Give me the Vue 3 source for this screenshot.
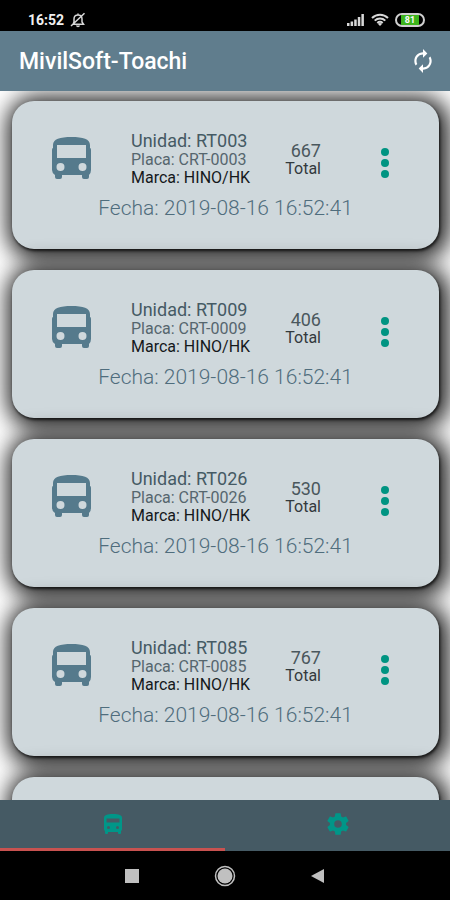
<script setup>
import { ref } from 'vue'

const tab = ref('buses')
const units = [
  { unidad: 'RT003', placa: 'CRT-0003', marca: 'HINO/HK', total: 667, fecha: '2019-08-16 16:52:41' },
  { unidad: 'RT009', placa: 'CRT-0009', marca: 'HINO/HK', total: 406, fecha: '2019-08-16 16:52:41' },
  { unidad: 'RT026', placa: 'CRT-0026', marca: 'HINO/HK', total: 530, fecha: '2019-08-16 16:52:41' },
  { unidad: 'RT085', placa: 'CRT-0085', marca: 'HINO/HK', total: 767, fecha: '2019-08-16 16:52:41' },
]
</script>

<template>
  <div class="app">
    <div class="status">
      <span class="clock">16:52</span>
      <svg class="bell" viewBox="0 0 16 16" aria-hidden="true">
        <path d="M3 12.2h10.5L12 10V7c0-2.300-1.500-4-4-4S4 4.700 4 7v3zM6.500 13.500c.6 1.200 2.400 1.200 3 0M8 1.500V3M1 14 14.500 1.200" fill="none" stroke="currentColor" stroke-width="1.500" />
      </svg>
      <span class="spacer"></span>
      <svg class="signal" viewBox="0 0 18 13" aria-hidden="true">
        <path d="M0 10h2.500v3H0zM3.600 8.500h2.500V13H3.600zM7.200 6.500h2.500V13H7.200zM10.800 4h2.500v9h-2.500zM14.400 1h2.500v12h-2.500z" fill="currentColor" />
      </svg>
      <svg class="wifi" viewBox="0 0 18 13" aria-hidden="true">
        <path d="M1 5C5.500.6 12.500.6 17 5M3.700 7.600c3-2.900 7.600-2.900 10.600 0M6.300 10c1.600-1.400 3.800-1.400 5.400 0" fill="none" stroke="currentColor" stroke-width="2" />
        <path d="M9 13 6.800 10.700c1.200-1.100 3.200-1.100 4.400 0z" fill="currentColor" />
      </svg>
      <span class="battery"><span class="charge">81</span></span>
    </div>

    <header class="bar">
      <h1>MivilSoft-Toachi</h1>
      <button class="refresh" type="button" aria-label="Actualizar">
        <svg viewBox="0 0 24 24" aria-hidden="true">
          <path d="M12 6v3l4-4-4-4v3c-4.420 0-8 3.580-8 8 0 1.570.46 3.030 1.240 4.260L6.700 14.800A5.900 5.900 0 0 1 6 12c0-3.310 2.690-6 6-6zm6.760 1.740L17.300 9.200c.44.84.7 1.790.7 2.800 0 3.310-2.690 6-6 6v-3l-4 4 4 4v-3c4.420 0 8-3.580 8-8 0-1.570-.46-3.030-1.240-4.260z" fill="currentColor" />
        </svg>
      </button>
    </header>

    <main class="list">
      <article v-for="u in units" :key="u.unidad" class="card">
        <div class="row">
          <svg class="bus" viewBox="0 0 39 42" aria-hidden="true">
            <path fill-rule="evenodd" fill="currentColor" d="M1 8C1 2 8 0 19.500 0S38 2 38 8v3q1 0 1 2v20q0 3-2 5v2q0 2-2 2h-3q-2 0-2-2v-2H10v2q0 2-2 2H5q-2 0-2-2v-2q-3-2-3-5V13q0-2 1-2zM5 8v13h29V8zM8.500 26a4 4 0 1 0 0 8 4 4 0 1 0 0-8zM30.500 26a4 4 0 1 0 0 8 4 4 0 1 0 0-8z" />
          </svg>
          <div class="details">
            <span class="unidad">Unidad: {{ u.unidad }}</span>
            <span class="placa">Placa: {{ u.placa }}</span>
            <span class="marca">Marca: {{ u.marca }}</span>
          </div>
          <div class="total">
            <span class="count">{{ u.total }}</span>
            <span>Total</span>
          </div>
          <button class="more" type="button" aria-label="Opciones">
            <svg viewBox="0 0 10 30" aria-hidden="true">
              <g fill="currentColor">
                <circle cx="5" cy="4" r="4" />
                <circle cx="5" cy="15" r="4" />
                <circle cx="5" cy="26" r="4" />
              </g>
            </svg>
          </button>
        </div>
        <p class="fecha">Fecha: {{ u.fecha }}</p>
      </article>
      <article class="card"></article>
    </main>

    <nav class="tabs">
      <button type="button" class="tab" :class="{ active: tab === 'buses' }" aria-label="Unidades" @click="tab = 'buses'">
        <svg class="tab-bus" viewBox="0 0 18 20" aria-hidden="true">
          <path fill-rule="evenodd" fill="currentColor" d="M0 4C0 1 3 0 9 0s9 1 9 4v11q0 1.500-1 2v2q0 1-1 1h-1q-1 0-1-1v-1H4v1q0 1-1 1H2q-1 0-1-1v-2q-1-.5-1-2zM2.500 4.500v4h13v-4zM4.500 12a1.500 1.500 0 1 0 0 3 1.500 1.500 0 1 0 0-3zM13.500 12a1.500 1.500 0 1 0 0 3 1.500 1.500 0 1 0 0-3z" />
        </svg>
      </button>
      <button type="button" class="tab" :class="{ active: tab === 'settings' }" aria-label="Ajustes" @click="tab = 'settings'">
        <svg class="tab-gear" viewBox="0 0 24 24" aria-hidden="true">
          <path fill="currentColor" d="M19.430 12.980c.04-.32.07-.64.07-.98s-.03-.66-.07-.98l2.110-1.650c.19-.15.24-.42.12-.64l-2-3.460c-.12-.22-.39-.3-.61-.22l-2.490 1c-.52-.4-1.080-.73-1.690-.98l-.38-2.650A.49.490 0 0 0 14 2h-4c-.25 0-.46.18-.49.42l-.38 2.650c-.61.25-1.170.59-1.690.98l-2.490-1c-.23-.09-.49 0-.61.22l-2 3.460c-.13.22-.07.49.12.64l2.110 1.650c-.04.32-.07.65-.07.98s.03.66.07.98l-2.110 1.650c-.19.15-.24.42-.12.64l2 3.460c.12.22.39.3.61.22l2.490-1c.52.4 1.080.73 1.690.98l.38 2.650c.03.24.24.42.49.42h4c.25 0 .46-.18.49-.42l.38-2.650c.61-.25 1.170-.59 1.690-.98l2.490 1c.23.09.49 0 .61-.22l2-3.460c.12-.22.07-.49-.12-.64zM12 15.500A3.500 3.500 0 1 1 12 8.500a3.500 3.500 0 0 1 0 7z" />
        </svg>
      </button>
    </nav>

    <div class="system">
      <button type="button" aria-label="Recientes">
        <svg viewBox="0 0 22 22" aria-hidden="true"><path d="M4 4h14v14H4z" fill="currentColor" /></svg>
      </button>
      <button type="button" aria-label="Inicio">
        <svg viewBox="0 0 22 22" aria-hidden="true">
          <circle cx="11" cy="11" r="9.500" fill="none" stroke="currentColor" stroke-width="1.500" />
          <circle cx="11" cy="11" r="7.500" fill="currentColor" />
        </svg>
      </button>
      <button type="button" aria-label="Atrás">
        <svg viewBox="0 0 22 22" aria-hidden="true"><path d="M17 4v14L4 11z" fill="currentColor" /></svg>
      </button>
    </div>
  </div>
</template>

<style>
body {
  margin: 0;
  background: #000;
}
</style>

<style scoped>
.app {
  display: flex;
  flex-direction: column;
  height: 100vh;
  font-family: Roboto, "Liberation Sans", sans-serif;
}

button {
  padding: 0;
  border: 0;
  background: none;
  cursor: pointer;
}

svg {
  display: block;
}

.status {
  display: flex;
  align-items: center;
  flex: none;
  box-sizing: border-box;
  height: 31px;
  padding: 8px 25px 0 28px;
  background: #000;
  color: #d8d8d8;
}

.clock {
  color: #f0f0f0;
  font-size: 14px;
  font-weight: 700;
}

.bell {
  width: 16px;
  height: 16px;
  margin-left: 6px;
}

.spacer {
  flex: 1;
}

.signal,
.wifi {
  width: 18px;
  height: 13px;
  margin-right: 6px;
}

.battery {
  display: flex;
  box-sizing: border-box;
  width: 30px;
  height: 14px;
  padding: 0 4px;
  border: 2px solid #d0d0d0;
  border-radius: 7px;
}

.charge {
  flex: 1;
  background: #3db51c;
  color: #fff;
  font-size: 9px;
  font-weight: 700;
  line-height: 10px;
  text-align: center;
}

.bar {
  display: flex;
  align-items: center;
  justify-content: space-between;
  flex: none;
  box-sizing: border-box;
  height: 60px;
  padding: 0 14px 0 19px;
  background: #607d8d;
  color: #fff;
}

h1 {
  margin: 0;
  font-size: 23px;
  font-weight: 500;
}

.refresh {
  color: #fff;
}

.refresh svg {
  width: 26px;
  height: 26px;
}

.list {
  display: flex;
  flex-direction: column;
  gap: 21px;
  flex: 1;
  min-height: 0;
  overflow: hidden;
  padding: 10px 11px 0 12px;
  background: #fff;
}

.card {
  flex: none;
  box-sizing: border-box;
  height: 148px;
  padding: 30px 49px 0 40px;
  border-radius: 22px;
  background: #cfd8dc;
  box-shadow: 3px 3px 22px 8px rgba(0, 0, 0, 0.85), 1px 2px 3px rgba(0, 0, 0, 0.7);
}

.row {
  display: flex;
  align-items: flex-start;
}

.bus {
  width: 39px;
  height: 42px;
  margin: 6px 40px 0 0;
  color: #557a8c;
}

.details {
  display: flex;
  flex-direction: column;
  flex: 1;
  font-size: 16px;
  line-height: 18px;
}

.unidad {
  color: #455a64;
  font-size: 18px;
  line-height: 20px;
}

.placa {
  color: #56666e;
}

.marca {
  color: #15191b;
}

.total {
  display: flex;
  flex-direction: column;
  align-items: flex-end;
  margin: 11px 59px 0 0;
  color: #333a3d;
  font-size: 16px;
  line-height: 18px;
}

.count {
  color: #4a575d;
  font-size: 18px;
}

.more {
  margin-top: 17px;
  color: #009482;
}

.more svg {
  width: 10px;
  height: 30px;
}

.fecha {
  margin: 9px -9px 0 0;
  color: #4f6d7d;
  font-size: 21px;
  font-weight: 300;
  line-height: 24px;
  text-align: center;
}

.tabs {
  display: flex;
  flex: none;
  height: 51px;
  background: #455a64;
}

.tab {
  display: flex;
  align-items: center;
  justify-content: center;
  flex: 1;
  border-bottom: 3px solid transparent;
  color: #009688;
}

.tab.active {
  border-bottom-color: #c85250;
}

.tab-bus {
  width: 18px;
  height: 20px;
}

.tab-gear {
  width: 26px;
  height: 26px;
}

.system {
  display: flex;
  align-items: center;
  justify-content: center;
  gap: 71px;
  flex: none;
  height: 49px;
  background: #000;
  color: #c0c0c0;
}

.system svg {
  width: 22px;
  height: 22px;
}

.system button {
  color: inherit;
}
</style>
